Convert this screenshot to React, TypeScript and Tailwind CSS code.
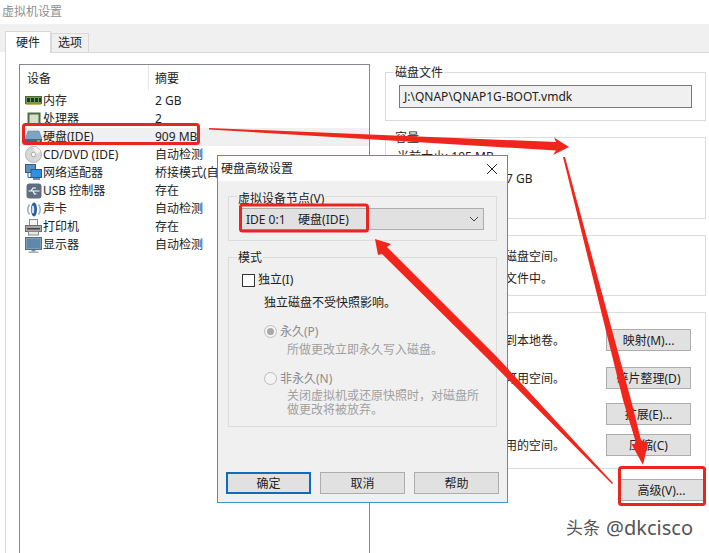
import type { ReactNode } from "react";

const font = "font-['Noto_Sans','Noto_Sans_CJK_SC',sans-serif]";

const MemoryIcon = () => (
  <svg width="17" height="12" viewBox="0 0 17 12">
    <rect x="0.5" y="1.5" width="16" height="7" fill="#6f9a5a" stroke="#4c6b3c" />
    <rect x="2" y="3" width="3" height="4" fill="#26381c" />
    <rect x="6" y="3" width="3" height="4" fill="#26381c" />
    <rect x="10" y="3" width="3" height="4" fill="#26381c" />
    <rect x="14" y="3" width="2" height="4" fill="#26381c" />
    <rect x="1" y="8.5" width="15" height="1.5" fill="#c9b35a" />
  </svg>
);

const CpuIcon = () => (
  <svg width="16" height="16" viewBox="0 0 16 16">
    <rect x="2.5" y="2.5" width="11" height="11" fill="#d7dfc9" stroke="#4f6b45" strokeWidth="2" />
  </svg>
);

const DiskIcon = () => (
  <svg width="17" height="14" viewBox="0 0 17 14">
    <path d="M3 1h11l3 8v4H0V9z" fill="#7ea3c4" stroke="#5c7c99" strokeWidth="0.5" />
    <rect x="0" y="9" width="17" height="4" fill="#48647d" />
    <rect x="12" y="10.5" width="3" height="1" fill="#b9e08a" />
  </svg>
);

const CdIcon = () => (
  <svg width="17" height="17" viewBox="0 0 17 17">
    <circle cx="8.5" cy="8.5" r="8" fill="#d8d8d8" stroke="#b5b5b5" />
    <path d="M8.5 1a7.5 7.5 0 0 1 7 5l-5 2z" fill="#f2f2f2" />
    <circle cx="8.5" cy="8.5" r="2.2" fill="#fff" stroke="#a5a5a5" />
  </svg>
);

const NetworkIcon = () => (
  <svg width="17" height="17" viewBox="0 0 17 17">
    <rect x="0.5" y="0.5" width="10" height="8" fill="#5a8fc0" stroke="#2d5f8f" />
    <path d="M3 8.5v5h3" stroke="#2d5f8f" fill="none" />
    <rect x="6" y="5.5" width="10.5" height="8" fill="#2f8fe0" stroke="#1d5c96" />
    <rect x="8" y="14" width="7" height="2" fill="#7a8a99" />
  </svg>
);

const UsbIcon = () => (
  <svg width="16" height="16" viewBox="0 0 16 16">
    <rect x="0.5" y="0.5" width="15" height="15" rx="3" fill="#5d6f80" />
    <path d="M2.5 8h11M9 8l4 0M5 8l2-3h3M7 8l1.5 3h2" stroke="#fff" strokeWidth="1.2" fill="none" />
  </svg>
);

const SoundIcon = () => (
  <svg width="16" height="17" viewBox="0 0 16 17">
    <ellipse cx="8" cy="8.5" rx="3" ry="7" fill="#2a5f9e" />
    <path d="M3.5 3.5Q0 8.5 3.5 13.5M12.5 3.5Q16 8.5 12.5 13.5" stroke="#9ab2cc" strokeWidth="1.6" fill="none" />
    <ellipse cx="7" cy="8.5" rx="1.3" ry="4" fill="#cfe0f2" />
  </svg>
);

const PrinterIcon = () => (
  <svg width="17" height="17" viewBox="0 0 17 17">
    <rect x="4.5" y="0.5" width="8" height="6" fill="#f4f4f4" stroke="#8a8a8a" />
    <rect x="0.5" y="6.5" width="16" height="6" fill="#a6a6a6" stroke="#6d6d6d" />
    <rect x="2" y="9" width="13" height="1.5" fill="#444" />
    <rect x="3.5" y="12.5" width="10" height="3.5" fill="#e8e8e8" stroke="#8a8a8a" />
  </svg>
);

const MonitorIcon = () => (
  <svg width="17" height="17" viewBox="0 0 17 17">
    <rect x="0.5" y="0.5" width="16" height="12" fill="#7d9cb8" stroke="#5b6f82" />
    <rect x="2" y="2" width="13" height="9" fill="#5f88ad" />
    <rect x="6.5" y="13" width="4" height="1.5" fill="#7a8794" />
    <rect x="3.5" y="14.5" width="10" height="1.5" fill="#a5b0ba" />
  </svg>
);

const devices: { icon: ReactNode; name: string; summary: string; active?: boolean }[] = [
  { icon: <MemoryIcon />, name: "内存", summary: "2 GB" },
  { icon: <CpuIcon />, name: "处理器", summary: "2" },
  { icon: <DiskIcon />, name: "硬盘(IDE)", summary: "909 MB", active: true },
  { icon: <CdIcon />, name: "CD/DVD (IDE)", summary: "自动检测" },
  { icon: <NetworkIcon />, name: "网络适配器", summary: "桥接模式(自动)" },
  { icon: <UsbIcon />, name: "USB 控制器", summary: "存在" },
  { icon: <SoundIcon />, name: "声卡", summary: "自动检测" },
  { icon: <PrinterIcon />, name: "打印机", summary: "存在" },
  { icon: <MonitorIcon />, name: "显示器", summary: "自动检测" },
];

const Group = ({ title, className, children }: { title: string; className: string; children?: ReactNode }) => (
  <fieldset className={`border border-[#dcdcdc] ${className}`}>
    <legend className="ml-2 px-px pt-[2px] text-xs leading-4">{title}</legend>
    {children}
  </fieldset>
);

const ToolButton = ({ label, className = "" }: { label: string; className?: string }) => (
  <button className={`h-[22px] w-[85px] border border-[#adadad] bg-[#e1e1e1] pt-[2px] text-xs ${className}`}>{label}</button>
);

const ToolRow = ({ text, label, className = "" }: { text: string; label: string; className?: string }) => (
  <div className={`flex h-[22px] items-center justify-between pl-[11px] pr-[14px] ${className}`}>
    <span className="pt-px text-xs">{text}</span>
    <ToolButton label={label} />
  </div>
);

const Radio = ({ checked }: { checked?: boolean }) => (
  <span className="flex h-[13px] w-[13px] items-center justify-center rounded-full border border-[#bcbcbc] bg-[#f4f4f4]">
    {checked && <span className="h-[7px] w-[7px] rounded-full bg-[#a8a8a8]" />}
  </span>
);

const AdvancedDialog = () => (
  <div className="absolute left-[217px] top-[155px] flex h-[348px] w-[291px] flex-col border border-[#3f94d0] bg-[#f0f0f0]">
    <div className="flex h-[25px] items-center justify-between bg-white pl-[3px] pr-[9px]">
      <span className="text-xs">硬盘高级设置</span>
      <svg width="12" height="12" viewBox="0 0 12 12">
        <path d="M1 1l10 10M11 1L1 11" stroke="#222" strokeWidth="1" />
      </svg>
    </div>
    <fieldset className="mx-[10px] mt-[4px] h-[56px] border border-[#dcdcdc]">
      <legend className="ml-2 px-px pt-[6px] text-xs leading-4">虚拟设备节点(V)</legend>
      <div className="mx-3 mt-px flex h-[22px] items-center justify-between border border-[#adadad] bg-[#e1e1e1] pl-[4px] pr-[3px] text-xs">
        <span className="whitespace-pre pt-[2px]">IDE 0:1    硬盘(IDE)</span>
        <svg width="12" height="12" viewBox="0 0 12 12">
          <path d="M2 4l4 4 4-4" stroke="#444" fill="none" />
        </svg>
      </div>
    </fieldset>
    <fieldset className="mx-[10px] mt-[7px] h-[179px] border border-[#dcdcdc]">
      <legend className="ml-2 px-px pt-[2px] text-xs leading-4">模式</legend>
      <label className="mt-[6px] flex h-4 items-center gap-[3px] pl-[13px] text-xs">
        <span className="h-[13px] w-[13px] border border-[#333] bg-white" />
        独立(I)
      </label>
      <p className="mt-[7px] h-4 pl-[35px] text-xs leading-4">独立磁盘不受快照影响。</p>
      <div className="mt-[12px] flex h-4 items-center gap-[3px] pl-[35px] text-xs text-[#8c8c8c]">
        <Radio checked />
        <span className="pt-[2px]">永久(P)</span>
      </div>
      <p className="mt-[3px] h-4 pl-[58px] text-xs leading-4 text-[#a0a0a0]">所做更改立即永久写入磁盘。</p>
      <div className="mt-[12px] flex h-4 items-center gap-[3px] pl-[35px] text-xs text-[#8c8c8c]">
        <Radio />
        <span className="pt-px">非永久(N)</span>
      </div>
      <p className="mt-[3px] pl-[58px] text-xs leading-[14px] text-[#a0a0a0]">
        关闭虚拟机或还原快照时，对磁盘所
        <br />
        做更改将被放弃。
      </p>
    </fieldset>
    <div className="mt-[45px] flex gap-[9px] pl-[8px]">
      <button className="h-[22px] w-[85px] border-2 border-[#0f6cbd] bg-[#e1e1e1] pt-[2px] text-xs">确定</button>
      <ToolButton label="取消" />
      <ToolButton label="帮助" />
    </div>
  </div>
);

// red marks drawn over the screenshot
const Annotations = () => (
  <svg className="pointer-events-none absolute left-0 top-0" width="709" height="553" viewBox="0 0 709 553">
    <g fill="none" stroke="#e8261f" strokeWidth="3">
      <rect x="23.5" y="124.5" width="175" height="19" rx="2" />
      <rect x="240.5" y="205" width="127" height="26" rx="2" />
      <rect x="619.5" y="467.5" width="85" height="37" rx="2" />
    </g>
    <g fill="#f0261c">
      <polygon points="209,128 556,142 554,137.5 569,147 553,155 556,150.5 209,129.5" />
      <polygon points="563,157 565,157 631,400 641,440 648,443 643,465 632,445 636,443 623,400" />
      <polygon points="613,483 612,484 487,358 382,254 378,255 375,239 391,244 387,247 497,357" />
    </g>
  </svg>
);

export default function App() {
  return (
    <div className={`relative h-[553px] w-[709px] overflow-hidden bg-white text-[#222] ${font}`}>
      <div className="flex h-6 items-center pl-[2px] text-xs text-[#8f8f8f]">虚拟机设置</div>

      <div className="flex h-7 items-end bg-[#f0f0f0] pl-[5px] text-xs">
        <div className="z-10 -mb-px flex h-[22px] w-[46px] items-center justify-center border border-b-0 border-[#d9d9d9] bg-white">硬件</div>
        <div className="flex h-[19px] w-[38px] items-center justify-center border border-b-0 border-[#d9d9d9] bg-[#f0f0f0]">选项</div>
      </div>

      <div className="ml-[5px] flex h-[501px] border-l border-t border-[#d9d9d9] pl-[13px] pt-[11px]">
        <div className="h-[520px] w-[351px] border border-[#828790] text-xs">
          <div className="flex h-[25px] items-center">
            <span className="w-[128px] pl-[7px] pt-[2px]">设备</span>
            <span className="flex h-full items-center border-l border-[#e5e5e5] pl-[6px] pt-[2px]">摘要</span>
          </div>
          <div className="pt-[1.5px]">
            {devices.map((d) => (
              <div key={d.name} className={`flex h-[18.1px] items-center ${d.active ? "bg-[#f0f0f0]" : ""}`}>
                <span className="flex w-[23px] shrink-0 justify-center pl-[4px]">{d.icon}</span>
                <span className="w-[112px] shrink-0">{d.name}</span>
                <span className="whitespace-nowrap">{d.summary}</span>
              </div>
            ))}
          </div>
        </div>

        <div className="-mt-px ml-[15px] flex w-[321px] flex-col gap-[7px]">
          <Group title="磁盘文件" className="h-[58px]">
            <div className="ml-[13px] mt-[4px] flex h-[23px] w-[293px] items-center border border-[#7a7a7a] bg-[#f0f0f0] pl-[4px] text-xs">
              J:\QNAP\QNAP1G-BOOT.vmdk
            </div>
          </Group>
          <Group title="容量" className="h-[91px]">
            <div className="pl-[11px] text-xs leading-[22px]">
              <p>当前大小: 105 MB</p>
              <p>系统可用空间: 1021.7 GB</p>
              <p>最大大小: 909 MB</p>
            </div>
          </Group>
          <Group title="磁盘信息" className="h-[70px]">
            <div className="mt-[2px] pl-[11px] text-xs leading-[22px]">
              <p>没有为此硬盘预分配磁盘空间。</p>
              <p>硬盘内容存储在单个文件中。</p>
            </div>
          </Group>
          <Group title="磁盘实用工具" className="h-[166px] pt-[8px]">
            <ToolRow text="将此虚拟机磁盘映射到本地卷。" label="映射(M)..." />
            <ToolRow text="整理文件碎片并整合可用空间。" label="碎片整理(D)" className="mt-4" />
            <ToolRow text="扩展磁盘容量。" label="扩展(E)..." className="mt-[14px]" />
            <ToolRow text="压缩磁盘以回收未使用的空间。" label="压缩(C)" className="mt-[9px]" />
          </Group>
          <ToolButton label="高级(V)..." className="mr-[2px] mt-[3px] w-[84px] self-end" />
        </div>
      </div>

      <AdvancedDialog />
      <Annotations />

      <div className="absolute left-[566px] top-[516px] flex items-center gap-[6px] text-[17px] leading-6 text-[#555] [text-shadow:0_0_2px_#fff]">
        <span>头条</span>
        <span className="text-[20px]">@dkcisco</span>
      </div>
    </div>
  );
}
